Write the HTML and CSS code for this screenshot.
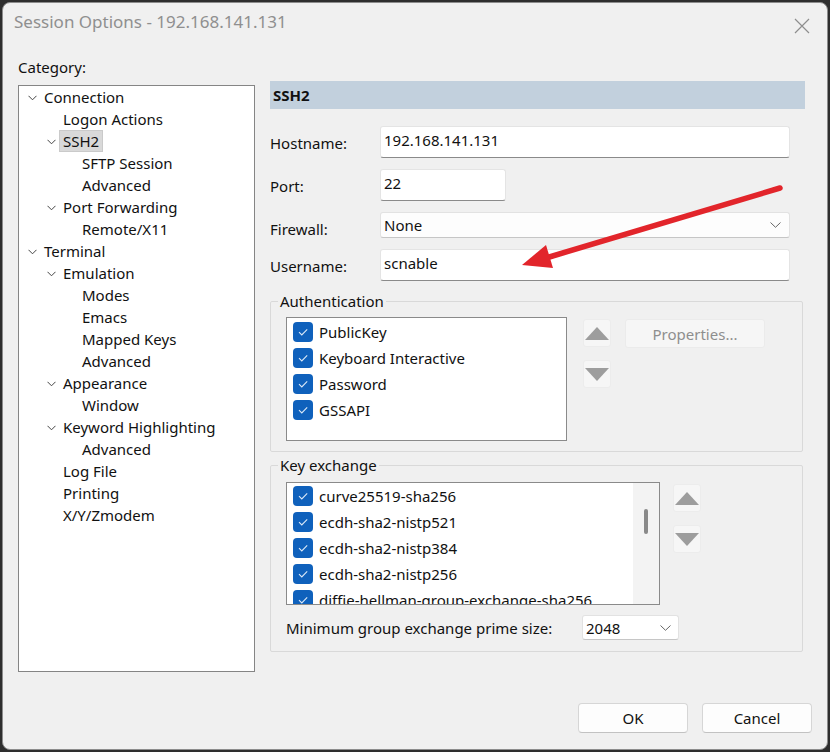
FILE: index.html
```html
<!DOCTYPE html>
<html lang="en">
<head>
<meta charset="utf-8">
<title>Session Options</title>
<link rel="stylesheet" href="styles.css">
</head>
<body>
<div class="dialog">
  <div class="titlebar">
    <span class="title">Session Options - 192.168.141.131</span>
    <svg class="close" width="16" height="16" viewBox="0 0 16 16"><path d="M1 1 L15 15 M15 1 L1 15" stroke="#8e8e8e" stroke-width="1.2" fill="none"/></svg>
  </div>

  <div class="body">
    <div class="left">
      <div class="cat-label">Category:</div>
      <div class="tree">
        <div class="node l0"><span class="twist"><svg width="9" height="6" viewBox="0 0 9 6"><polyline points="0.5,0.8 4.5,4.8 8.5,0.8" fill="none" stroke="#444" stroke-width="1"/></svg></span><span class="txt">Connection</span></div>
        <div class="node l1"><span class="twist"></span><span class="txt">Logon Actions</span></div>
        <div class="node l1"><span class="twist"><svg width="9" height="6" viewBox="0 0 9 6"><polyline points="0.5,0.8 4.5,4.8 8.5,0.8" fill="none" stroke="#444" stroke-width="1"/></svg></span><span class="txt selected">SSH2</span></div>
        <div class="node l2"><span class="twist"></span><span class="txt">SFTP Session</span></div>
        <div class="node l2"><span class="twist"></span><span class="txt">Advanced</span></div>
        <div class="node l1"><span class="twist"><svg width="9" height="6" viewBox="0 0 9 6"><polyline points="0.5,0.8 4.5,4.8 8.5,0.8" fill="none" stroke="#444" stroke-width="1"/></svg></span><span class="txt">Port Forwarding</span></div>
        <div class="node l2"><span class="twist"></span><span class="txt">Remote/X11</span></div>
        <div class="node l0"><span class="twist"><svg width="9" height="6" viewBox="0 0 9 6"><polyline points="0.5,0.8 4.5,4.8 8.5,0.8" fill="none" stroke="#444" stroke-width="1"/></svg></span><span class="txt">Terminal</span></div>
        <div class="node l1"><span class="twist"><svg width="9" height="6" viewBox="0 0 9 6"><polyline points="0.5,0.8 4.5,4.8 8.5,0.8" fill="none" stroke="#444" stroke-width="1"/></svg></span><span class="txt">Emulation</span></div>
        <div class="node l2"><span class="twist"></span><span class="txt">Modes</span></div>
        <div class="node l2"><span class="twist"></span><span class="txt">Emacs</span></div>
        <div class="node l2"><span class="twist"></span><span class="txt">Mapped Keys</span></div>
        <div class="node l2"><span class="twist"></span><span class="txt">Advanced</span></div>
        <div class="node l1"><span class="twist"><svg width="9" height="6" viewBox="0 0 9 6"><polyline points="0.5,0.8 4.5,4.8 8.5,0.8" fill="none" stroke="#444" stroke-width="1"/></svg></span><span class="txt">Appearance</span></div>
        <div class="node l2"><span class="twist"></span><span class="txt">Window</span></div>
        <div class="node l1"><span class="twist"><svg width="9" height="6" viewBox="0 0 9 6"><polyline points="0.5,0.8 4.5,4.8 8.5,0.8" fill="none" stroke="#444" stroke-width="1"/></svg></span><span class="txt">Keyword Highlighting</span></div>
        <div class="node l2"><span class="twist"></span><span class="txt">Advanced</span></div>
        <div class="node l1"><span class="twist"></span><span class="txt">Log File</span></div>
        <div class="node l1"><span class="twist"></span><span class="txt">Printing</span></div>
        <div class="node l1"><span class="twist"></span><span class="txt">X/Y/Zmodem</span></div>
      </div>
    </div>

    <div class="right">
      <div class="header">SSH2</div>

      <div class="row first">
        <span class="lbl">Hostname:</span>
        <div class="input wide">192.168.141.131</div>
      </div>
      <div class="row">
        <span class="lbl">Port:</span>
        <div class="input port">22</div>
      </div>
      <div class="row fw">
        <span class="lbl">Firewall:</span>
        <div class="select wide"><span>None</span><svg width="11" height="6" viewBox="0 0 11 6"><polyline points="0.5,0.5 5.5,5.3 10.5,0.5" fill="none" stroke="#666" stroke-width="1"/></svg></div>
      </div>
      <div class="row">
        <span class="lbl">Username:</span>
        <div class="input wide">scnable</div>
      </div>

      <fieldset class="group auth">
        <legend>Authentication</legend>
        <div class="group-body">
          <div class="list auth-list">
            <div class="item"><span class="cb"><svg width="20" height="20" viewBox="0 0 20 20"><polyline points="6,10.2 8.8,13 14.2,7.4" fill="none" stroke="#dbe9f8" stroke-width="1.1"/></svg></span>PublicKey</div>
            <div class="item"><span class="cb"><svg width="20" height="20" viewBox="0 0 20 20"><polyline points="6,10.2 8.8,13 14.2,7.4" fill="none" stroke="#dbe9f8" stroke-width="1.1"/></svg></span>Keyboard Interactive</div>
            <div class="item"><span class="cb"><svg width="20" height="20" viewBox="0 0 20 20"><polyline points="6,10.2 8.8,13 14.2,7.4" fill="none" stroke="#dbe9f8" stroke-width="1.1"/></svg></span>Password</div>
            <div class="item"><span class="cb"><svg width="20" height="20" viewBox="0 0 20 20"><polyline points="6,10.2 8.8,13 14.2,7.4" fill="none" stroke="#dbe9f8" stroke-width="1.1"/></svg></span>GSSAPI</div>
          </div>
          <div class="arrows auth-arrows">
            <div class="abtn"><svg width="24" height="13" viewBox="0 0 24 13"><polygon points="12,0 24,13 0,13" fill="#9d9d9d"/></svg></div>
            <div class="abtn"><svg width="24" height="13" viewBox="0 0 24 13"><polygon points="0,0 24,0 12,13" fill="#9d9d9d"/></svg></div>
          </div>
          <div class="props">Properties...</div>
        </div>
      </fieldset>

      <fieldset class="group kex">
        <legend>Key exchange</legend>
        <div class="group-body">
          <div class="list kex-list">
            <div class="kex-items">
              <div class="item"><span class="cb"><svg width="20" height="20" viewBox="0 0 20 20"><polyline points="6,10.2 8.8,13 14.2,7.4" fill="none" stroke="#dbe9f8" stroke-width="1.1"/></svg></span>curve25519-sha256</div>
              <div class="item"><span class="cb"><svg width="20" height="20" viewBox="0 0 20 20"><polyline points="6,10.2 8.8,13 14.2,7.4" fill="none" stroke="#dbe9f8" stroke-width="1.1"/></svg></span>ecdh-sha2-nistp521</div>
              <div class="item"><span class="cb"><svg width="20" height="20" viewBox="0 0 20 20"><polyline points="6,10.2 8.8,13 14.2,7.4" fill="none" stroke="#dbe9f8" stroke-width="1.1"/></svg></span>ecdh-sha2-nistp384</div>
              <div class="item"><span class="cb"><svg width="20" height="20" viewBox="0 0 20 20"><polyline points="6,10.2 8.8,13 14.2,7.4" fill="none" stroke="#dbe9f8" stroke-width="1.1"/></svg></span>ecdh-sha2-nistp256</div>
              <div class="item"><span class="cb"><svg width="20" height="20" viewBox="0 0 20 20"><polyline points="6,10.2 8.8,13 14.2,7.4" fill="none" stroke="#dbe9f8" stroke-width="1.1"/></svg></span>diffie-hellman-group-exchange-sha256</div>
            </div>
            <div class="scroll"><div class="thumb"></div></div>
          </div>
          <div class="arrows kex-arrows">
            <div class="abtn"><svg width="24" height="13" viewBox="0 0 24 13"><polygon points="12,0 24,13 0,13" fill="#9d9d9d"/></svg></div>
            <div class="abtn"><svg width="24" height="13" viewBox="0 0 24 13"><polygon points="0,0 24,0 12,13" fill="#9d9d9d"/></svg></div>
          </div>
        </div>
        <div class="minrow">
          <span class="minlbl">Minimum group exchange prime size:</span>
          <div class="select small"><span>2048</span><svg width="11" height="6" viewBox="0 0 11 6"><polyline points="0.5,0.5 5.5,5.3 10.5,0.5" fill="none" stroke="#666" stroke-width="1"/></svg></div>
        </div>
      </fieldset>
    </div>
  </div>

  <div class="footer">
    <button class="btn ok">OK</button>
    <button class="btn cancel">Cancel</button>
  </div>

  <svg class="annotation" width="830" height="752" viewBox="0 0 830 752">
    <line x1="780" y1="188" x2="546" y2="258" stroke="#e2252b" stroke-width="5.5" stroke-linecap="round"/>
    <polygon points="522,265 546,245 553,268" fill="#e2252b"/>
  </svg>
</div>
</body>
</html>
```

FILE: styles.css
```css
* { box-sizing: border-box; }

html, body {
  margin: 0;
  padding: 0;
}

body {
  width: 830px;
  height: 752px;
  background: #2e2e2e;
  font-family: "Noto Sans", "Open Sans", sans-serif;
  font-size: 15px;
  color: #111;
  overflow: hidden;
}

.dialog {
  position: relative;
  margin: 2px 0 0 2px;
  width: 826px;
  height: 748px;
  background: #f0f0f0;
  border: 1px solid #8c8c8c;
  border-radius: 8px;
  display: flex;
  flex-direction: column;
}

/* Title bar */
.titlebar {
  height: 44px;
  display: flex;
  justify-content: space-between;
  align-items: flex-start;
  padding: 7px 0 0 11px;
}

.title {
  font-size: 17px;
  line-height: 24px;
  color: #8f8f8f;
}

.close {
  margin: 8px 17px 0 0;
}

/* Body */
.body {
  display: flex;
  gap: 15px;
  padding-left: 15px;
}

.left {
  width: 237px;
}

.cat-label {
  margin-top: 10px;
  line-height: 20px;
}

.tree {
  margin-top: 8px;
  height: 587px;
  background: #fff;
  border: 1px solid #858585;
  padding-top: 0;
}

.node {
  display: flex;
  align-items: center;
  height: 22px;
  line-height: 22px;
  white-space: nowrap;
}

.node.l0 { padding-left: 6px; }
.node.l1 { padding-left: 25px; }
.node.l2 { padding-left: 44px; }

.twist {
  width: 19px;
  height: 22px;
  flex: none;
  display: flex;
  align-items: center;
  padding-left: 3px;
  padding-top: 1px;
}

.txt.selected {
  background: #d9d9d9;
  border: 1px solid #cacaca;
  margin-left: -4px;
  padding: 0 3px;
  line-height: 20px;
}

/* Right panel */
.right {
  width: 535px;
  margin-top: 34px;
}

.header {
  height: 28px;
  line-height: 28px;
  background: #c2d0dd;
  font-weight: bold;
  padding-left: 3px;
}

.row {
  display: flex;
  align-items: center;
  margin-top: 11px;
}

.row.first { margin-top: 17px; }

.row.fw { align-items: flex-end; }

.lbl {
  width: 110px;
  flex: none;
  padding-top: 2px;
}

.row.fw .lbl {
  padding-top: 0;
  line-height: 20px;
  margin-bottom: -1px;
}

.input {
  height: 32px;
  background: #fff;
  border: 1px solid #e4e4e4;
  border-bottom-color: #8a8a8a;
  border-radius: 3px;
  padding: 3px 0 0 3px;
  line-height: 20px;
}

.input.wide { width: 410px; }
.input.port { width: 126px; }

.select {
  height: 26px;
  background: #fdfdfd;
  border: 1px solid #e2e2e2;
  border-bottom-color: #c6c6c6;
  border-radius: 3px;
  display: flex;
  align-items: center;
  justify-content: space-between;
  padding: 0 8px 0 3px;
  line-height: 20px;
}

.select.wide { width: 410px; }

/* Groups */
.group {
  margin: 10px 0 0 0;
  width: 533px;
  border: 1px solid #d9d9d9;
  border-radius: 2px;
  padding: 0 0 10px 15px;
}

.group legend {
  margin-left: -8px;
  padding: 0 2px;
  line-height: 20px;
}

.group.kex {
  margin-top: 3px;
  padding-bottom: 11px;
}

.group-body {
  display: flex;
  align-items: flex-start;
}

.list {
  background: #fff;
  border: 1px solid #8a8a8a;
  padding-top: 1px;
}

.auth-list {
  margin-top: 6px;
  width: 281px;
  height: 124px;
}

.item {
  display: flex;
  align-items: center;
  gap: 6px;
  height: 26px;
  padding-left: 6px;
  white-space: nowrap;
}

.cb {
  width: 20px;
  height: 20px;
  flex: none;
  background: #0f61bc;
  border-radius: 4px;
  display: block;
}

.cb svg { display: block; }

.arrows {
  display: flex;
  flex-direction: column;
  gap: 13px;
  margin-top: 8px;
}

.auth-arrows { margin-left: 16px; }

.abtn {
  width: 28px;
  height: 28px;
  background: #f6f6f6;
  border: 1px solid #ececec;
  border-radius: 3px;
  display: flex;
  align-items: center;
  justify-content: center;
}

.props {
  margin: 8px 0 0 14px;
  width: 140px;
  height: 29px;
  background: #f6f6f6;
  border: 1px solid #ebebeb;
  border-radius: 3px;
  color: #8e8e8e;
  display: flex;
  align-items: center;
  justify-content: center;
}

.kex-list {
  margin-top: 7px;
  width: 374px;
  height: 123px;
  display: flex;
  overflow: hidden;
  padding-top: 0;
}

.kex-items {
  flex: 1;
  overflow: hidden;
  padding-top: 0;
}

.scroll {
  width: 26px;
  flex: none;
  background: #f3f3f3;
  position: relative;
  padding-top: 26px;
  display: flex;
  justify-content: center;
}

.thumb {
  width: 4px;
  height: 25px;
  border-radius: 2px;
  background: #898989;
}

.kex-arrows {
  margin-left: 13px;
  margin-top: 9px;
}

.minrow {
  display: flex;
  align-items: center;
  margin-top: 10px;
}

.minlbl {
  width: 296px;
  flex: none;
  padding-top: 0;
}

.select.small {
  width: 97px;
  height: 25px;
  background: #fff;
  padding-right: 7px;
}

/* Footer */
.footer {
  margin-top: auto;
  display: flex;
  justify-content: flex-end;
  gap: 14px;
  padding: 0 15px 16px 0;
}

.btn {
  width: 110px;
  height: 30px;
  background: #fdfdfd;
  border: 1px solid #d6d6d6;
  border-bottom-color: #c2c2c2;
  border-radius: 4px;
  font-family: "Noto Sans", "Open Sans", sans-serif;
  font-size: 15px;
  color: #111;
  padding: 0;
}

.annotation {
  position: absolute;
  left: -3px;
  top: -3px;
  pointer-events: none;
}
```
